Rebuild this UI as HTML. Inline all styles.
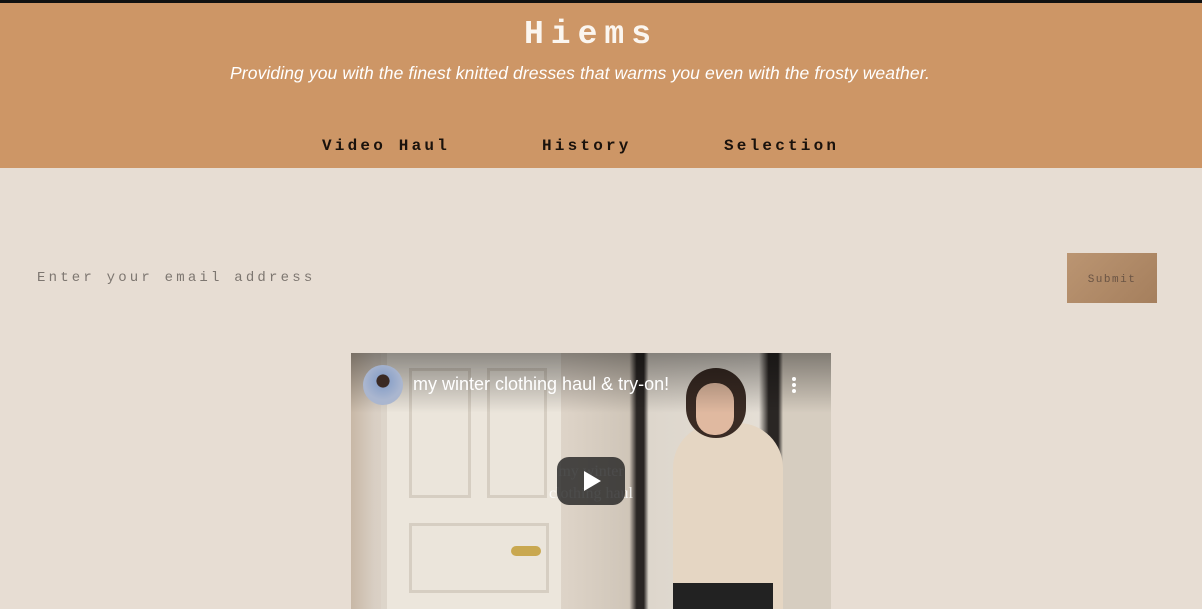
<!DOCTYPE html>
<html><head><style>
*{margin:0;padding:0;box-sizing:border-box}
body{width:1202px;height:609px;background:#e7ddd3;overflow:hidden;position:relative;font-family:"Liberation Sans",sans-serif}
.top{position:absolute;left:0;top:0;width:1202px;height:3px;background:#111}
header{position:absolute;left:0;top:3px;width:1202px;height:165px;background:#cd9666}
h1{position:absolute;top:13px;left:0;width:1182px;text-align:center;font-family:"Liberation Mono",monospace;font-size:33px;font-weight:bold;color:#fbf6f0;letter-spacing:7px}
.sub{position:absolute;top:60px;left:0;width:1160px;text-align:center;font-style:italic;font-size:17.5px;color:#fff;letter-spacing:0.1px}
nav a{position:absolute;top:134px;font-family:"Liberation Mono",monospace;font-weight:bold;font-size:16px;color:#1a120c;letter-spacing:3.2px;text-decoration:none}
.em{position:absolute;left:37px;top:270px;font-family:"Liberation Mono",monospace;font-size:14px;color:#7d7670;letter-spacing:3.2px}
.btn{position:absolute;left:1067px;top:253px;width:90px;height:50px;background:linear-gradient(135deg,#bb9572,#a57f5d);font-family:"Liberation Mono",monospace;font-size:11px;color:#6a5444;letter-spacing:1.5px;text-align:center;line-height:54px}
.vid{position:absolute;left:351px;top:353px;width:480px;height:256px;background:linear-gradient(90deg,#c8b8a6 0%,#d9cfc4 5%,#e4dcd1 20%,#ddd3c7 45%,#cfc5b8 58%,#2a2624 59.5%,#2a2624 61%,#ddd6cc 62%,#e4ded5 85%,#2a2624 87%,#2a2624 89%,#d6cdc0 90%);overflow:hidden}
.door{position:absolute;left:30px;top:0;width:180px;height:256px;background:#ece6dc;border-left:6px solid #ddd5ca}
.panel{position:absolute;border:3px solid #d6cec2;background:#ebe5db}
.shade{position:absolute;left:0;top:0;width:480px;height:60px;background:linear-gradient(#00000066,#0000)}
.av{position:absolute;left:12px;top:12px;width:40px;height:40px;border-radius:50%;background:radial-gradient(circle at 50% 40%,#3a2a24 20%,#8fa4c9 22%,#aab6cf 60%)}
.vt{position:absolute;left:62px;top:21px;color:#fff;font-size:18px}
.dots{position:absolute;left:441px;top:24px;width:4px}
.dots i{display:block;width:4px;height:4px;border-radius:50%;background:#fff;margin-bottom:2px}
.person{position:absolute;left:322px;top:70px;width:110px;height:190px;background:#e5d6c3;border-radius:45px 45px 0 0}
.head{position:absolute;left:335px;top:15px;width:60px;height:70px;background:#3a2b24;border-radius:30px}
.face{position:absolute;left:345px;top:30px;width:38px;height:52px;background:#e0b9a0;border-radius:18px}
.play{position:absolute;left:206px;top:104px;width:68px;height:48px;background:#212121cc;border-radius:12px}
.play:after{content:"";position:absolute;left:27px;top:14px;border-left:17px solid #fff;border-top:10px solid transparent;border-bottom:10px solid transparent}
.ov{position:absolute;left:180px;top:108px;width:120px;text-align:center;color:#fff;font-family:"Liberation Serif",serif;font-size:16px;line-height:22px;opacity:.85}
</style></head><body>
<div class="top"></div>
<header>
<h1>Hiems</h1>
<div class="sub">Providing you with the finest knitted dresses that warms you even with the frosty weather.</div>
<nav><a style="left:322px">Video Haul</a><a style="left:542px">History</a><a style="left:724px">Selection</a></nav>
</header>
<div class="em">Enter your email address</div>
<div class="btn">Submit</div>
<div class="vid">
<div class="door"><div class="panel" style="left:22px;top:15px;width:62px;height:130px"></div><div class="panel" style="left:100px;top:15px;width:60px;height:130px"></div><div class="panel" style="left:22px;top:170px;width:140px;height:70px"></div></div>
<div style="position:absolute;left:160px;top:193px;width:30px;height:10px;background:#c9a850;border-radius:5px"></div>
<div class="person"></div><div class="head"></div><div class="face"></div>
<div style="position:absolute;left:322px;top:230px;width:100px;height:30px;background:#222"></div>
<div class="shade"></div>
<div class="av"></div>
<div class="vt">my winter clothing haul &amp; try-on!</div>
<div class="dots"><i></i><i></i><i></i></div>
<div class="ov">my winter<br>clothing haul</div>
<div class="play"></div>
</div>
</body></html>
